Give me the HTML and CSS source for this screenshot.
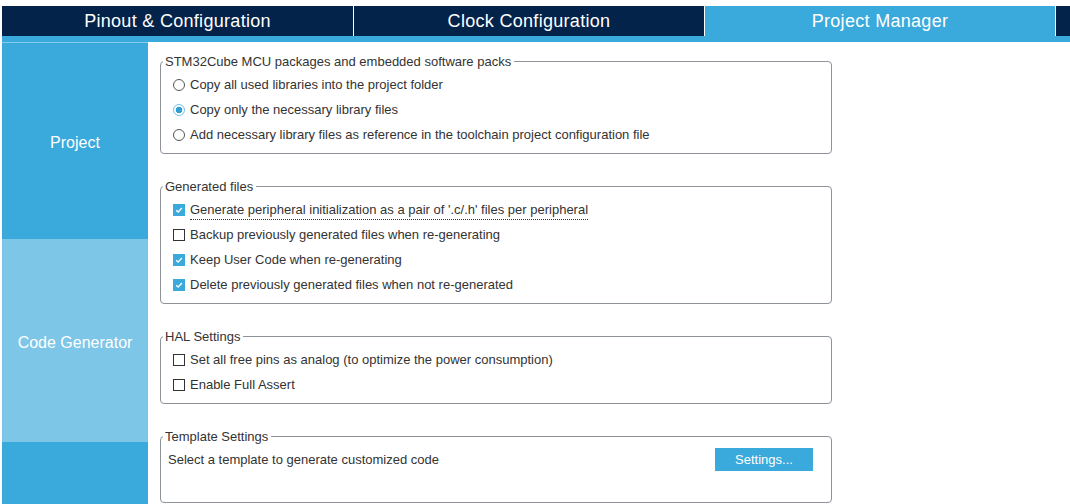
FILE: index.html
```html
<!DOCTYPE html>
<html lang="en">
<head>
<meta charset="utf-8">
<title>Project Manager</title>
<link rel="stylesheet" href="styles.css">
</head>
<body>
<div class="app">
  <nav class="tabs">
    <div class="tab tab-first">Pinout &amp; Configuration</div>
    <div class="tab">Clock Configuration</div>
    <div class="tab tab-active">Project Manager</div>
    <div class="tab tab-rest"></div>
  </nav>
  <div class="tabline"></div>
  <div class="main">
    <aside class="side">
      <div class="side-item side-project">Project</div>
      <div class="side-item side-codegen">Code Generator</div>
      <div class="side-rest"></div>
    </aside>
    <section class="content">
      <fieldset class="group">
        <legend>STM32Cube MCU packages and embedded software packs</legend>
        <div class="row"><span class="rb"></span><span class="lbl">Copy all used libraries into the project folder</span></div>
        <div class="row"><span class="rb rb-on"></span><span class="lbl">Copy only the necessary library files</span></div>
        <div class="row"><span class="rb"></span><span class="lbl">Add necessary library files as reference in the toolchain project configuration file</span></div>
      </fieldset>
      <fieldset class="group">
        <legend>Generated files</legend>
        <div class="row"><span class="cb cb-on"><svg viewBox="0 0 12 12"><path d="M2.6 6.2 L5 8.5 L9.5 3.6"/></svg></span><span class="lbl lbl-focus">Generate peripheral initialization as a pair of '.c/.h' files per peripheral</span></div>
        <div class="row"><span class="cb"></span><span class="lbl">Backup previously generated files when re-generating</span></div>
        <div class="row"><span class="cb cb-on"><svg viewBox="0 0 12 12"><path d="M2.6 6.2 L5 8.5 L9.5 3.6"/></svg></span><span class="lbl">Keep User Code when re-generating</span></div>
        <div class="row"><span class="cb cb-on"><svg viewBox="0 0 12 12"><path d="M2.6 6.2 L5 8.5 L9.5 3.6"/></svg></span><span class="lbl">Delete previously generated files when not re-generated</span></div>
      </fieldset>
      <fieldset class="group">
        <legend>HAL Settings</legend>
        <div class="row"><span class="cb"></span><span class="lbl">Set all free pins as analog (to optimize the power consumption)</span></div>
        <div class="row"><span class="cb"></span><span class="lbl">Enable Full Assert</span></div>
      </fieldset>
      <fieldset class="group group-template">
        <legend>Template Settings</legend>
        <div class="template-row">
          <span class="lbl">Select a template to generate customized code</span>
          <button class="btn" type="button">Settings...</button>
        </div>
      </fieldset>
    </section>
  </div>
</div>
</body>
</html>
```
FILE: styles.css
```css
* { box-sizing: border-box; }
html, body { margin: 0; background: #fff; }
body {
  font-family: "Liberation Sans", Arial, sans-serif;
  font-size: 13px;
  color: #333;
}
.app {
  width: 1070px;
  height: 504px;
  overflow: hidden;
  padding: 6px 0 0 2px;
  display: flex;
  flex-direction: column;
}
.tabs {
  display: flex;
  gap: 1px;
  height: 30px;
  flex: none;
}
.tab {
  width: 350px;
  flex: none;
  background: #03234b;
  color: #fff;
  font-size: 18px;
  letter-spacing: 0.3px;
  display: flex;
  align-items: center;
  justify-content: center;
}
.tab-first { width: 351px; }
.tab-active { background: #3aa9db; }
.tab-rest { width: auto; flex: 1; }
.tabline {
  height: 6px;
  background: #3aa9db;
  flex: none;
}
.main {
  flex: 1;
  display: flex;
  min-height: 0;
}
.side {
  width: 146px;
  flex: none;
  display: flex;
  flex-direction: column;
  background: #3aa9db;
}
.side-item {
  display: flex;
  align-items: center;
  justify-content: center;
  color: #fff;
  font-size: 16px;
}
.side-project {
  height: 199px;
  padding-top: 3px;
  border-top: 1px solid #86ccec;
  border-bottom: 2px solid #7dc6e8;
  background: #3aa9db;
}
.side-codegen {
  height: 201px;
  padding-top: 2px;
  background: #7dc6e8;
}
.side-rest { flex: 1; background: #3aa9db; }
.content {
  padding: 12px 0 0 12px;
}
.group {
  width: 672px;
  margin: 0 0 25px 0;
  border: 1px solid #8e9399;
  border-radius: 4px;
  padding: 3px 7px 6px 7px;
  min-width: 0;
}
.group legend {
  font-size: 13px;
  line-height: 15px;
  padding: 0 3px 0 2px;
  margin-left: -5px;
  color: #333;
}
.row {
  height: 25px;
  display: flex;
  align-items: center;
  gap: 5px;
  padding-left: 5px;
}
.lbl { line-height: 15px; white-space: nowrap; }
.lbl-focus {
  display: inline-block;
  border-bottom: 1px dotted #333;
  padding-bottom: 2px;
  margin-top: 3px;
}
.cb {
  width: 12px;
  height: 12px;
  flex: none;
  border: 1px solid #333;
  background: #fff;
  display: flex;
}
.cb-on {
  border-color: #3aa9db;
  background: #3aa9db;
}
.cb svg {
  width: 10px;
  height: 10px;
  fill: none;
  stroke: #fff;
  stroke-width: 1.7;
}
.rb {
  width: 12px;
  height: 12px;
  flex: none;
  border: 1px solid #555;
  border-radius: 50%;
  background: #fff;
}
.rb-on {
  border-color: #79c2e6;
  background: radial-gradient(circle, #2f9fd6 0 3px, #fff 3.6px);
}
.group-template {
  min-height: 74px;
  padding-top: 3px;
}
.template-row {
  height: 25px;
  display: flex;
  align-items: center;
  justify-content: space-between;
  padding-left: 0;
  padding-right: 11px;
}
.btn {
  width: 98px;
  height: 23px;
  border: none;
  background: #3aa9db;
  color: #fff;
  font-family: "Liberation Sans", Arial, sans-serif;
  font-size: 13px;
  padding: 0;
}
```
